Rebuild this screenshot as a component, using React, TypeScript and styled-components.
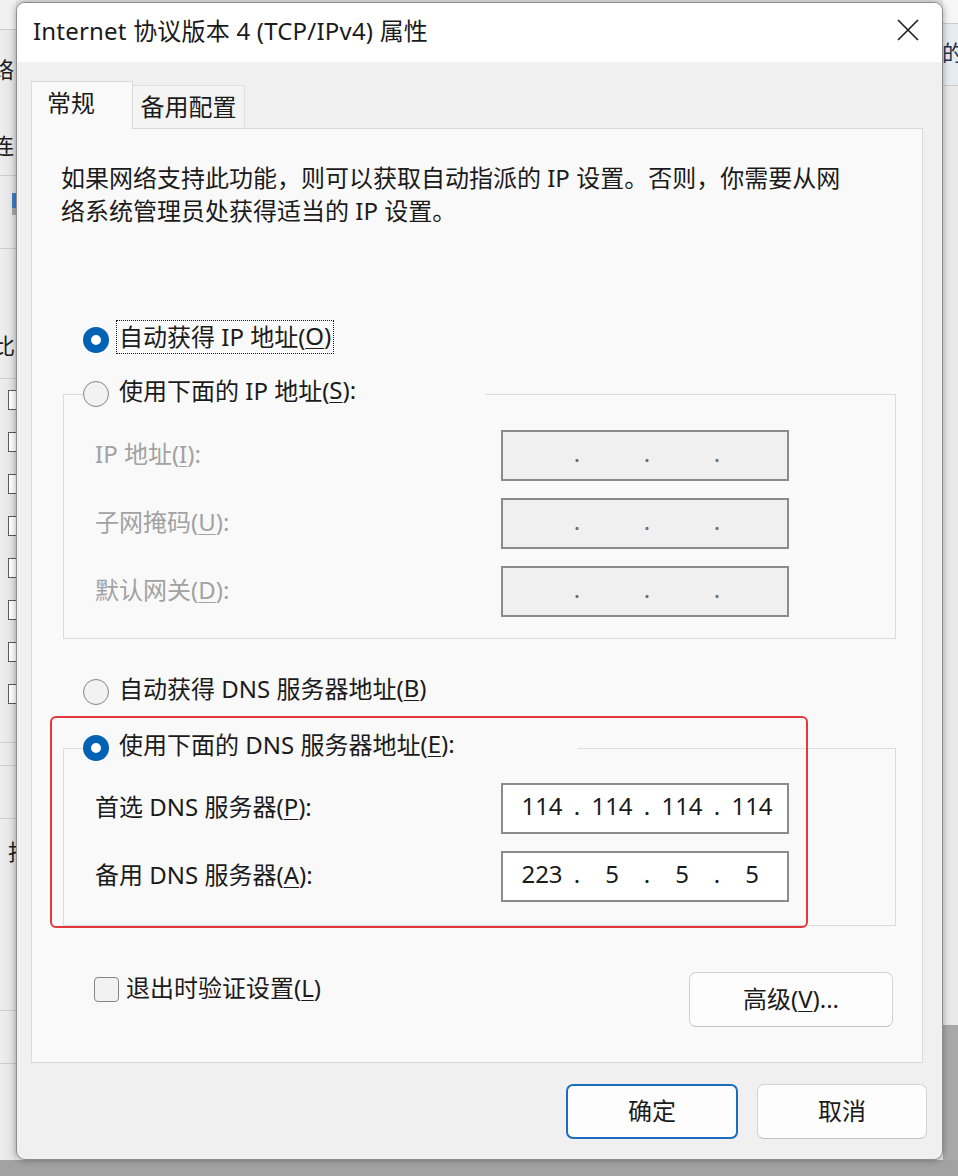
import React from "react";
import styled, { createGlobalStyle } from "styled-components";

const FONT = `"Noto Sans", "Noto Sans CJK SC", sans-serif`;

const Global = createGlobalStyle`
  html, body { margin: 0; padding: 0; }
  body { width: 958px; height: 1176px; overflow: hidden; font-family: ${FONT}; }
  * { box-sizing: border-box; }
  u { text-decoration-thickness: 1px; text-underline-offset: 3px; }
`;

/* ---------- desktop + background window ---------- */

const Desktop = styled.div`
  position: relative;
  width: 958px;
  height: 1176px;
  overflow: hidden;
  background: linear-gradient(180deg, #8a8a8a 0%, #a2a2a2 100%);
`;

const BackWindow = styled.div`
  position: absolute;
  left: 0;
  top: 0;
  width: 958px;
  height: 1160px;
  background: linear-gradient(90deg, #eeeeee 0px, #e2e2e2 16px, #e9e9e9 17px);
`;

const Peek = styled.div<{ $side: "left" | "right" }>`
  position: absolute;
  top: 0;
  height: 1160px;
  width: 16px;
  overflow: hidden;
  ${(p) => (p.$side === "left" ? "left: 0;" : "right: 0; width: 15px;")}
`;

const PeekBand = styled.div<{ $top: number; $h: number; $bg: string }>`
  position: absolute;
  left: 0;
  right: 0;
  top: ${(p) => p.$top}px;
  height: ${(p) => p.$h}px;
  background: ${(p) => p.$bg};
`;

const PeekLine = styled.div<{ $top: number }>`
  position: absolute;
  left: 0;
  right: 0;
  top: ${(p) => p.$top}px;
  height: 1px;
  background: #cbcbcb;
`;

const PeekGlyph = styled.span<{ $top: number; $left: number; $color?: string }>`
  position: absolute;
  top: ${(p) => p.$top}px;
  left: ${(p) => p.$left}px;
  font-size: 22px;
  line-height: 1;
  color: ${(p) => p.$color ?? "#1d1d1d"};
  white-space: nowrap;
`;

const PeekCheck = styled.div<{ $top: number }>`
  position: absolute;
  left: 8px;
  top: ${(p) => p.$top}px;
  width: 20px;
  height: 20px;
  border: 1.5px solid #5b5b5b;
  background: #ffffff;
`;

const PeekIcon = styled.div`
  position: absolute;
  left: 12px;
  top: 193px;
  width: 6px;
  height: 22px;
  background: linear-gradient(180deg, #3f7fc8 0%, #3f7fc8 70%, #a9a9a9 70%);
`;

/* ---------- dialog ---------- */

const Dialog = styled.div`
  position: absolute;
  left: 16px;
  top: 2px;
  width: 927px;
  height: 1158px;
  border: 1px solid #8e8e8e;
  border-radius: 9px;
  overflow: hidden;
  background: #f0f0f0;
  display: flex;
  flex-direction: column;
  box-shadow: 0 0 7px rgba(0, 0, 0, 0.35);
  font-family: ${FONT};
  font-size: 24px;
  color: #1b1b1b;
`;

const TitleBar = styled.div`
  height: 59px;
  flex-shrink: 0;
  background: #ffffff;
  display: flex;
  align-items: center;
  padding: 0 22px 0 16px;
`;

const Title = styled.div`
  flex: 1;
  font-size: 24px;
  letter-spacing: 0.2px;
  white-space: nowrap;
  padding-bottom: 6px;
`;

const CloseButton = styled.button`
  width: 24px;
  height: 24px;
  padding: 0;
  border: none;
  background: none;
  display: flex;
  align-items: center;
  justify-content: center;
  margin-top: -6px;
`;

const Body = styled.div`
  flex: 1;
  display: flex;
  flex-direction: column;
  padding: 19px 19px 0 14px;
`;

const TabRow = styled.div`
  display: flex;
  align-items: flex-end;
  height: 47px;
`;

const Tab = styled.div<{ $active?: boolean }>`
  display: flex;
  align-items: center;
  white-space: nowrap;
  ${(p) =>
    p.$active
      ? `
    width: 102px; height: 48px; margin-bottom: -1px; position: relative; z-index: 1;
    padding: 0 0 9px 15px; background: #f9f9f9;
    border: 1px solid #d9d9d9; border-bottom: none;
  `
      : `
    width: 112px; height: 43px; justify-content: center; padding-bottom: 4px;
    background: #f4f4f4; border: 1px solid #e1e1e1; border-left: none; border-bottom: none;
  `}
`;

const Panel = styled.div`
  position: relative;
  height: 935px;
  border: 1px solid #d9d9d9;
  background: #f9f9f9;
  padding: 35px 26px 35px 31px;
  display: flex;
  flex-direction: column;
`;

const Description = styled.div`
  margin: -3px 0 3px -2px;
  line-height: 33px;
`;

const DescLine = styled.div`
  white-space: nowrap;
`;

const RadioRow = styled.div<{ $mt: number }>`
  display: flex;
  align-items: center;
  height: 34px;
  gap: 7px;
  margin: ${(p) => p.$mt}px 0 0 20px;
`;

const RadioDot = styled.span<{ $on?: boolean }>`
  width: 26px;
  height: 26px;
  border-radius: 50%;
  flex-shrink: 0;
  ${(p) =>
    p.$on
      ? "border: 8px solid #0062b5; background: #ffffff;"
      : "border: 1.5px solid #858585; background: #f2f2f2;"}
`;

const RadioLabel = styled.span<{ $focus?: boolean }>`
  display: inline-flex;
  align-items: center;
  height: 34px;
  padding: 0 2px 4px;
  margin-bottom: 6px;
  white-space: nowrap;
  border: 1px dotted ${(p) => (p.$focus ? "#1a1a1a" : "transparent")};
`;

const Group = styled.fieldset<{ $mt: number }>`
  margin: ${(p) => p.$mt}px 0 0 0;
  padding: 0;
  min-width: 0;
  border: 1px solid #dcdcdc;
`;

const Legend = styled.legend<{ $w: number }>`
  padding: 0;
  margin-left: 19px;
  width: ${(p) => p.$w}px;
  height: 34px;
  display: flex;
  align-items: center;
  gap: 7px;
`;

const GroupRows = styled.div<{ $pt: number; $pb: number }>`
  display: flex;
  flex-direction: column;
  gap: 17px;
  padding: ${(p) => p.$pt}px 0 ${(p) => p.$pb}px 31px;
`;

const FieldRow = styled.div`
  display: flex;
  align-items: center;
  height: 51px;
`;

const FieldLabel = styled.span<{ $disabled?: boolean }>`
  width: 406px;
  white-space: nowrap;
  padding-bottom: 6px;
  color: ${(p) => (p.$disabled ? "#a2a2a2" : "#1b1b1b")};
`;

const IpBox = styled.div<{ $disabled?: boolean }>`
  width: 288px;
  height: 51px;
  border: 2px solid #8b8b8b;
  background: ${(p) => (p.$disabled ? "#f0f0f0" : "#ffffff")};
  color: ${(p) => (p.$disabled ? "#6f6f6f" : "#1b1b1b")};
  display: flex;
  align-items: center;
  padding: 0 0 6px 11px;
  line-height: 30px;
`;

const Octet = styled.span`
  width: 56px;
  text-align: center;
`;

const Dot = styled.span`
  width: 14px;
  text-align: center;
`;

const BottomRow = styled.div`
  margin-top: 46px;
  display: flex;
  justify-content: space-between;
  align-items: flex-start;
`;

const CheckRow = styled.div`
  display: flex;
  align-items: center;
  gap: 7px;
  height: 34px;
  margin-left: 31px;
`;

const CheckBox = styled.span`
  width: 25px;
  height: 25px;
  border-radius: 4px;
  border: 1.5px solid #858585;
  background: #f2f2f2;
  flex-shrink: 0;
`;

const CheckLabel = styled.span`
  white-space: nowrap;
  padding-bottom: 5px;
`;

const DialogButton = styled.button<{ $w: number; $primary?: boolean }>`
  width: ${(p) => p.$w}px;
  height: 55px;
  border-radius: 7px;
  background: #fdfdfd;
  font-family: ${FONT};
  font-size: 24px;
  color: #1b1b1b;
  padding: 0 0 4px;
  border: ${(p) => (p.$primary ? "2px solid #1c6cbd" : "1px solid #d3d3d3")};
  ${(p) => (p.$primary ? "" : "border-bottom-color: #c2c2c2;")}
`;

const AdvancedWrap = styled.div`
  margin-right: 3px;
`;

const Highlight = styled.div`
  position: absolute;
  left: 18px;
  top: 587px;
  width: 758px;
  height: 212px;
  border: 2px solid #e3383c;
  border-radius: 6px;
  pointer-events: none;
`;

const ButtonRow = styled.div`
  display: flex;
  justify-content: flex-end;
  gap: 19px;
  margin: 21px -4px 0 0;
`;

/* ---------- pieces ---------- */

function Radio({ on, focus, children }: { on?: boolean; focus?: boolean; children: React.ReactNode }) {
  return (
    <>
      <RadioDot $on={on} />
      <RadioLabel $focus={focus}>{children}</RadioLabel>
    </>
  );
}

function IpField({ values, disabled }: { values?: string[]; disabled?: boolean }) {
  const v = values ?? ["", "", "", ""];
  return (
    <IpBox $disabled={disabled}>
      <Octet>{v[0]}</Octet>
      <Dot>.</Dot>
      <Octet>{v[1]}</Octet>
      <Dot>.</Dot>
      <Octet>{v[2]}</Octet>
      <Dot>.</Dot>
      <Octet>{v[3]}</Octet>
    </IpBox>
  );
}

const leftLines = [29, 175, 248, 378, 742, 765, 818, 1010, 1063];
const leftChecks = [390, 432, 474, 516, 558, 600, 642, 684];

export default function App() {
  return (
    <Desktop>
      <Global />
      <BackWindow>
        <Peek $side="left">
          <PeekBand $top={0} $h={29} $bg="#f1f1f1" />
          {leftLines.map((t) => (
            <PeekLine key={t} $top={t} />
          ))}
          <PeekGlyph $top={58} $left={-8}>络</PeekGlyph>
          <PeekGlyph $top={134} $left={-8}>连</PeekGlyph>
          <PeekIcon />
          <PeekGlyph $top={334} $left={-7}>比</PeekGlyph>
          {leftChecks.map((t) => (
            <PeekCheck key={t} $top={t} />
          ))}
          <PeekGlyph $top={840} $left={8}>指</PeekGlyph>
        </Peek>
        <Peek $side="right">
          <PeekBand $top={0} $h={23} $bg="#f6f6f6" />
          <PeekLine $top={23} />
          <PeekBand $top={24} $h={61} $bg="#e6ebf0" />
          <PeekLine $top={85} />
          <PeekGlyph $top={41} $left={-1} $color="#1e3550">的</PeekGlyph>
          <PeekBand $top={1025} $h={135} $bg="#a9a9a9" />
        </Peek>
      </BackWindow>

      <Dialog>
        <TitleBar>
          <Title>Internet 协议版本 4 (TCP/IPv4) 属性</Title>
          <CloseButton aria-label="关闭">
            <svg width="22" height="22" viewBox="0 0 22 22">
              <path d="M1 1 L21 21 M21 1 L1 21" stroke="#1b1b1b" strokeWidth="1.6" fill="none" />
            </svg>
          </CloseButton>
        </TitleBar>

        <Body>
          <TabRow>
            <Tab $active>常规</Tab>
            <Tab>备用配置</Tab>
          </TabRow>

          <Panel>
            <Description>
              <DescLine>如果网络支持此功能，则可以获取自动指派的 IP 设置。否则，你需要从网</DescLine>
              <DescLine>络系统管理员处获得适当的 IP 设置。</DescLine>
            </Description>

            <RadioRow $mt={93}>
              <Radio on focus>
                自动获得 IP 地址(<u>O</u>)
              </Radio>
            </RadioRow>

            <Group $mt={20}>
              <Legend $w={402}>
                <Radio>
                  使用下面的 IP 地址(<u>S</u>):
                </Radio>
              </Legend>
              <GroupRows $pt={19} $pb={21}>
                <FieldRow>
                  <FieldLabel $disabled>
                    IP 地址(<u>I</u>):
                  </FieldLabel>
                  <IpField disabled />
                </FieldRow>
                <FieldRow>
                  <FieldLabel $disabled>
                    子网掩码(<u>U</u>):
                  </FieldLabel>
                  <IpField disabled />
                </FieldRow>
                <FieldRow>
                  <FieldLabel $disabled>
                    默认网关(<u>D</u>):
                  </FieldLabel>
                  <IpField disabled />
                </FieldRow>
              </GroupRows>
            </Group>

            <RadioRow $mt={36}>
              <Radio>
                自动获得 DNS 服务器地址(<u>B</u>)
              </Radio>
            </RadioRow>

            <Group $mt={22}>
              <Legend $w={495}>
                <Radio on>
                  使用下面的 DNS 服务器地址(<u>E</u>):
                </Radio>
              </Legend>
              <GroupRows $pt={18} $pb={23}>
                <FieldRow>
                  <FieldLabel>
                    首选 DNS 服务器(<u>P</u>):
                  </FieldLabel>
                  <IpField values={["114", "114", "114", "114"]} />
                </FieldRow>
                <FieldRow>
                  <FieldLabel>
                    备用 DNS 服务器(<u>A</u>):
                  </FieldLabel>
                  <IpField values={["223", "5", "5", "5"]} />
                </FieldRow>
              </GroupRows>
            </Group>

            <BottomRow>
              <CheckRow>
                <CheckBox />
                <CheckLabel>
                  退出时验证设置(<u>L</u>)
                </CheckLabel>
              </CheckRow>
              <AdvancedWrap>
                <DialogButton $w={204}>
                  高级(<u>V</u>)...
                </DialogButton>
              </AdvancedWrap>
            </BottomRow>

            <Highlight />
          </Panel>

          <ButtonRow>
            <DialogButton $w={172} $primary>
              确定
            </DialogButton>
            <DialogButton $w={170}>取消</DialogButton>
          </ButtonRow>
        </Body>
      </Dialog>
    </Desktop>
  );
}
